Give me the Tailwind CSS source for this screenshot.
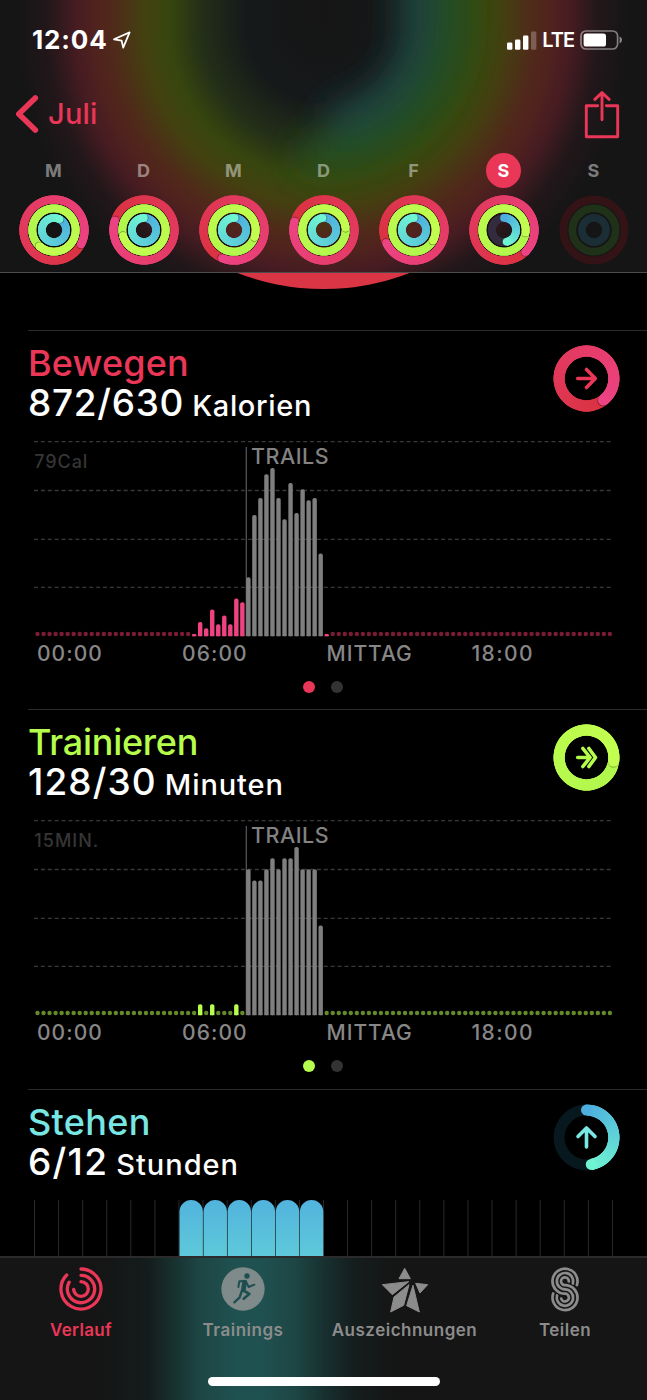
<!DOCTYPE html>
<html lang="de">
<head>
<meta charset="utf-8">
<title>Aktivität</title>
<script src="https://cdn.jsdelivr.net/npm/@tailwindcss/browser@4"></script>
</head>
<body class="bg-black">
<div class="w-[647px] h-[1400px] bg-black overflow-hidden flex flex-col font-['Inter',sans-serif] text-white">

  <header class="relative isolate h-[273px] shrink-0 bg-[#151515] border-b border-[#4c4c4c] flex flex-col overflow-hidden">
    <svg class="absolute inset-0 -z-10" width="647" height="272" viewBox="0 0 647 272">
      <defs>
        <radialGradient id="halo" gradientUnits="userSpaceOnUse" cx="323" cy="25" r="320">
          <stop offset="0" stop-color="#151515"/><stop offset=".24" stop-color="#16191a"/><stop offset=".38" stop-color="#232f18"/>
          <stop offset=".48" stop-color="#37460e"/><stop offset=".56" stop-color="#434110"/><stop offset=".66" stop-color="#50291a"/>
          <stop offset=".71" stop-color="#50231e"/><stop offset=".77" stop-color="#471c22"/><stop offset=".86" stop-color="#22171a"/><stop offset=".96" stop-color="#151515"/>
        </radialGradient>
        <linearGradient id="haloTop" gradientUnits="userSpaceOnUse" x1="3" x2="643" y1="0" y2="0">
          <stop offset=".02" stop-color="#151515"/><stop offset=".07" stop-color="#22171a"/><stop offset=".115" stop-color="#471c22"/>
          <stop offset=".145" stop-color="#50231e"/><stop offset=".17" stop-color="#50291a"/><stop offset=".22" stop-color="#434110"/>
          <stop offset=".26" stop-color="#37460e"/><stop offset=".31" stop-color="#232f18"/><stop offset=".38" stop-color="#16191a"/><stop offset=".5" stop-color="#151515"/>
          <stop offset=".62" stop-color="#16191a"/><stop offset=".69" stop-color="#232f18"/><stop offset=".74" stop-color="#37460e"/>
          <stop offset=".78" stop-color="#434110"/><stop offset=".83" stop-color="#50291a"/><stop offset=".855" stop-color="#50231e"/>
          <stop offset=".885" stop-color="#471c22"/><stop offset=".93" stop-color="#22171a"/><stop offset=".98" stop-color="#151515"/>
        </linearGradient>
        <filter id="soft" filterUnits="userSpaceOnUse" x="150" y="-150" width="450" height="450"><feGaussianBlur stdDeviation="16"/></filter>
      </defs>
      <rect width="647" height="272" fill="url(#halo)"/>
      <rect width="647" height="25" fill="url(#haloTop)"/>
      <g filter="url(#soft)" fill="none">
        <path d="M453 -100V25A130 130 0 0 1 300 153" stroke="#285a1e" stroke-opacity=".8" stroke-width="32"/>
        <path d="M417 -100V25A94 94 0 0 1 328 121" stroke="#1a4640" stroke-opacity=".95" stroke-width="34"/>
      </g>
    </svg>

    <div class="h-[80px] shrink-0 flex items-center pl-[32px] pr-[25px]">
      <span class="text-[26px] font-bold leading-none tracking-[0.85px]">12:04</span>
      <svg class="ml-[4px]" width="20" height="20" viewBox="0 0 20 20"><path d="M2 9.3L17.6 2.4L11.2 17.6L9.6 10.6Z" fill="none" stroke="#fff" stroke-width="1.8" stroke-linejoin="round"/></svg>
      <svg class="ml-auto" width="30" height="19" viewBox="0 0 30 19" fill="#fff"><rect x="0" y="11.5" width="5.4" height="7.2" rx="1.3"/><rect x="8" y="8.4" width="5.4" height="10.3" rx="1.3"/><rect x="16" y="4.4" width="5.4" height="14.3" rx="1.3"/><rect x="24" y="0.6" width="5.4" height="18.1" rx="1.3" fill-opacity=".25"/></svg>
      <span class="ml-[5px] text-[20px] font-semibold leading-none tracking-[-1px]">LTE</span>
      <svg class="ml-[6px] mr-[-1px]" width="43" height="20" viewBox="0 0 43 20"><rect x="1" y="1" width="36.6" height="18" rx="5" fill="none" stroke="#fff" stroke-opacity=".45" stroke-width="1.7"/><rect x="3.6" y="3.4" width="22.4" height="13.2" rx="2.6" fill="#fff"/><path d="M39.6 6.6Q42 7.6 42 10T39.6 13.4Z" fill="#fff" fill-opacity=".5"/></svg>
    </div>

    <div class="h-[70px] shrink-0 flex items-center pl-[15px] pr-[27.5px] text-[#ea3657]">
      <svg class="-mt-[3px]" width="25" height="38" viewBox="0 0 25 38" fill="none" stroke="currentColor" stroke-width="5.6" stroke-linecap="round" stroke-linejoin="round"><path d="M20.3 4L3.8 20L20.300 36" transform="translate(0 -1)"/></svg>
      <span class="ml-[8px] -mt-[3px] text-[29px] font-medium leading-none tracking-[0.2px]">Juli</span>
      <svg class="ml-auto" width="36" height="48" viewBox="0 0 36 48" fill="none" stroke="currentColor" stroke-width="2.9" stroke-linecap="round" stroke-linejoin="round"><path d="M13.7 14.700H2.3V45.800H33.7V14.700H22.3M18 28.700V1.800M10.9 8.400L18 1.600L25.1 8.400"/></svg>
    </div>

    <div class="px-[8.5px] pt-[3px] grid grid-cols-7 justify-items-center text-[18px] font-bold text-white/45">
      <span class="size-[35px] flex items-center justify-center">M</span>
      <span class="size-[35px] flex items-center justify-center">D</span>
      <span class="size-[35px] flex items-center justify-center">M</span>
      <span class="size-[35px] flex items-center justify-center">D</span>
      <span class="size-[35px] flex items-center justify-center">F</span>
      <span class="size-[35px] flex items-center justify-center rounded-full bg-[#ea3657] text-white">S</span>
      <span class="size-[35px] flex items-center justify-center">S</span>
    </div>
    <div id="days" class="px-[8.5px] pt-[6.5px] grid grid-cols-7 justify-items-center"></div>
  </header>

  <main class="h-[983px] shrink-0 overflow-hidden">
    <div class="h-[57px]">
      <svg width="647" height="57" viewBox="0 273 647 57"><circle cx="323.5" cy="49.500" r="239.500" fill="#da3545"/></svg>
    </div>

    <section class="h-[379.4px]">
      <div class="ml-[28px] border-t border-[#2a2a2a]"></div>
      <div class="flex justify-between pl-[28px] pr-[27px] pt-[12px]">
        <div>
          <h2 class="h-[40px] leading-[40px] text-[36px] font-medium tracking-[0.15px] text-[#ea3657]">Bewegen</h2>
          <p class="h-[38px] flex items-baseline font-medium"><span class="text-[37px] leading-[39px] tracking-[0.7px]">872/630</span><span class="ml-[8px] text-[29px] leading-none tracking-[0.65px]">Kalorien</span></p>
        </div>
        <svg id="moveRing" class="mt-[2px]" width="67" height="67" viewBox="-33.5 -33.5 67 67"></svg>
      </div>
      <svg id="moveChart" class="block" width="647" height="251" viewBox="0 421 647 251"></svg>
      <div class="flex gap-[16px] pl-[303px] pt-[9px]"><i class="size-[12px] rounded-full bg-[#ea3657]"></i><i class="size-[12px] rounded-full bg-[#333]"></i></div>
    </section>

    <section class="h-[379.4px]">
      <div class="ml-[28px] border-t border-[#2a2a2a]"></div>
      <div class="flex justify-between pl-[28px] pr-[27px] pt-[12px]">
        <div>
          <h2 class="h-[40px] leading-[40px] text-[36px] font-medium tracking-[-0.25px] text-[#b5fc4c]">Trainieren</h2>
          <p class="h-[38px] flex items-baseline font-medium"><span class="text-[37px] leading-[39px] tracking-[1.1px]">128/30</span><span class="ml-[8px] text-[29px] leading-none tracking-[0.9px]">Minuten</span></p>
        </div>
        <svg id="exRing" class="mt-[2px]" width="67" height="67" viewBox="-33.5 -33.5 67 67"></svg>
      </div>
      <svg id="exChart" class="block" width="647" height="251" viewBox="0 421 647 251"></svg>
      <div class="flex gap-[16px] pl-[303px] pt-[9px]"><i class="size-[12px] rounded-full bg-[#b5fc4c]"></i><i class="size-[12px] rounded-full bg-[#333]"></i></div>
    </section>

    <section>
      <div class="ml-[28px] border-t border-[#2a2a2a]"></div>
      <div class="flex justify-between pl-[28px] pr-[27px] pt-[12px]">
        <div>
          <h2 class="h-[40px] leading-[40px] text-[36px] font-medium tracking-[0.35px] text-[#78e6e2]">Stehen</h2>
          <p class="h-[38px] flex items-baseline font-medium"><span class="text-[37px] leading-[39px] tracking-[1.3px]">6/12</span><span class="ml-[8px] text-[29px] leading-none tracking-[0.95px]">Stunden</span></p>
        </div>
        <svg id="standRing" class="mt-[2px]" width="67" height="67" viewBox="-33.5 -33.5 67 67"></svg>
      </div>
      <svg id="standChart" class="block" width="647" height="100" viewBox="0 1180 647 100"></svg>
    </section>
  </main>

  <footer class="h-[144px] shrink-0 border-t-2 border-[#2b2b2c] bg-[linear-gradient(90deg,#151515_100px,#141c1c_148px,#17302d_172px,#1d4644_200px,#1f5150_235px,#1f5150_262px,#1d4644_295px,#17302f_325px,#151d1d_355px,#151515_395px)]">
    <nav class="flex h-[82px] text-[17px] font-semibold text-[#8c8c8c] leading-[20px]">
      <div class="w-[162px] flex flex-col items-center pt-[9px] text-[#ea3657]">
        <svg width="44" height="44" viewBox="178 52 132 132" fill="none" stroke="currentColor" stroke-width="10" stroke-linecap="round"><path d="M244 58A60 60 0 1 1 201 76M244 77A41 41 0 1 1 208.500 97.500M244 96A22 22 0 1 1 222 119"/></svg>
        <span class="mt-[8.5px] tracking-[0.35px]">Verlauf</span>
      </div>
      <div class="w-[162px] flex flex-col items-center pt-[9px]">
        <svg width="44" height="44" viewBox="662 52 132 132"><circle cx="728" cy="118" r="65" fill="#7f8a8a"/><circle cx="740" cy="79" r="8" fill="#1f4e50"/><g fill="none" stroke="#1f4e50" stroke-linecap="round" stroke-linejoin="round"><path d="M733 97L729 121" stroke-width="14"/><path d="M714 112L717 95L736 94L745 112L762 105" stroke-width="6"/><path d="M729 122L747 133L730 147" stroke-width="8"/><path d="M725 122L718 143L702 158" stroke-width="7"/></g></svg>
        <span class="mt-[8.5px] tracking-[0.5px]">Trainings</span>
      </div>
      <div class="w-[161px] flex flex-col items-center pt-[9px]">
        <svg width="50" height="46" viewBox="166 51 150 138" fill="#8c8c8c" stroke="#8c8c8c" stroke-width="3" stroke-linejoin="round"><path d="M240 55L223 86H257ZM173 104L252 95L203 134ZM253 104L208 141L198 186L237 166ZM265 106L284 186L246 167ZM273 100L309 104L286 129Z"/></svg>
        <span class="mt-[6.5px] tracking-[0.5px]">Auszeichnungen</span>
      </div>
      <div class="w-[160px] flex flex-col items-center pt-[9px]">
        <svg width="30" height="45" viewBox="0 0 30 45" fill="none" stroke="#8c8c8c" stroke-width="2.7" stroke-linecap="round"><path d="M26.900 18A12.500 12.500 0 1 0 15 26.700A3.900 3.900 0 1 1 11.200 31.500"/><path d="M22.900 16.500A8.200 8.200 0 1 0 15 22.400A8.200 8.200 0 1 1 7 28.500"/><path d="M18.800 14.500A3.900 3.900 0 1 0 15 18.100A12.500 12.500 0 1 1 3.200 26.500"/></svg>
        <span class="mt-[7.5px] tracking-[0.45px]">Teilen</span>
      </div>
    </nav>
    <div class="mt-[37px] ml-[208px] w-[231.5px] h-[9px] rounded-full bg-white"></div>
  </footer>
</div>

<script>
const mix = (a, b, t) => 'rgb(' + a.map((v, i) => Math.round(v + (b[i] - v) * t)).join(',') + ')';
const RED = [[218, 50, 64], [236, 67, 132]];
const GREEN = [[176, 246, 76], [195, 255, 80]];
const BLUE = [[78, 175, 222], [112, 245, 210]];
const at = (r, a) => [r * Math.sin(a * Math.PI / 180), -r * Math.cos(a * Math.PI / 180)];

// Arc of a given sweep that finishes at angle `end`, shaded from pal[0] to pal[1].
// Each segment runs on under the next one so that no seams show.
function ring(r, w, end, sweep, pal) {
  let s = '';
  const n = Math.round(sweep / 4), start = end - sweep;
  const seg = i => {
    const a = start + sweep * i / n, b = Math.min(end, start + sweep * (i + 3) / n);
    const p = at(r, a), q = at(r, b);
    return `<path d="M${p}A${r} ${r} 0 0 1 ${q}" stroke="${mix(pal[0], pal[1], i / n)}" stroke-width="${w}" fill="none"/>`;
  };
  const tail = Math.round(n * 0.8);
  for (let i = 0; i < tail; i++) s += seg(i);
  if (sweep >= 360) {
    const c = at(r, end + 60 / r);
    s += `<circle cx="${c[0]}" cy="${c[1]}" r="${w / 2 - .3}" fill="#000" fill-opacity=".4"/>`;
  } else {
    const c = at(r, start);
    s += `<circle cx="${c[0]}" cy="${c[1]}" r="${w / 2}" fill="${mix(pal[0], pal[1], 0)}"/>`;
  }
  for (let i = tail; i < n; i++) s += seg(i);
  const e = at(r, end);
  return s + `<circle cx="${e[0]}" cy="${e[1]}" r="${w / 2}" fill="${mix(pal[0], pal[1], 1)}"/>`;
}
const track = (r, w, c) => `<circle r="${r}" fill="none" stroke="${c}" stroke-width="${w}"/>`;

const days = [[118, 222, 28], [288, 254, 0], [203, 109, 4], [286, 84, -6], [245, 119, 0], [136, 97, null]];
let html = '';
for (const [m, e, b] of days) {
  html += '<svg width="70" height="70" viewBox="-35 -35 70 70">' + track(22, 20, 'rgba(0,0,0,.45)')
    + ring(30.6, 8, m, 360, RED) + ring(21.7, 7.8, e, 360, GREEN)
    + (b === null ? track(12.1, 8, '#332c3e') + ring(12.1, 7.6, 168, 168, BLUE) : ring(12.1, 7.6, b, 360, BLUE)) + '</svg>';
}
html += '<svg width="70" height="70" viewBox="-35 -35 70 70">' + track(30.6, 8, '#331315') + track(21.7, 7.8, '#20311a') + track(12.1, 7.8, '#1b2d35') + '</svg>';
document.getElementById('days').innerHTML = html;

const glyph = (d, c) => `<path d="${d}" fill="none" stroke="${c}" stroke-width="3.600" stroke-linecap="round" stroke-linejoin="round"/>`;
document.getElementById('moveRing').innerHTML = ring(27.4, 11, 142, 360, RED) + glyph('M-8.800 0H8.500M0 -9L8.800 0L0 9', '#ea3657');
document.getElementById('exRing').innerHTML = ring(27.4, 11, 98, 360, GREEN) + glyph('M-8.800 0H3M-3.600 -9L3.600 0L-3.600 9', '#b5fc4c') + glyph('M2.400 -9L9 0L2.400 9', '#b5fc4c');
document.getElementById('standRing').innerHTML = track(27.4, 11, '#07181f') + ring(27.4, 11, 170, 170, BLUE) + glyph('M0 9.500V-8.500M-8.500 -1L0 -9.500L8.500 -1', '#78e6e2');

function chart(id, unit, ls, color, dim, vals, grays, halfDots) {
  let s = '';
  for (const y of [441.7, 490.5, 539.4, 587.4]) s += `<path d="M34 ${y}H612" stroke="#383838" stroke-width="1.300" stroke-dasharray="4 2.900"/>`;
  s += '<path d="M246.300 447V636" stroke="#5a5a5a" stroke-width="1.200"/>';
  for (let i = 0; i < 96; i++) {
    const x = 37.5 + i * 6.025;
    let h = 4.4, c = dim;
    if (i >= 27 && i < 35) { const v = vals[i - 27]; if (v) { h = v; c = color; } }
    else if (i >= 35 && i < 48) { h = grays[i - 35]; c = '#7f7f7f'; }
    else if (halfDots && (i === 26 || i === 48)) { h = 2.2; c = color; }
    s += `<rect x="${x - 2.2}" y="${636.2 - h}" width="4.400" height="${h}" rx="${h < 5 ? Math.min(2.2, h / 2) : 1.9}" fill="${c}"/>`;
    if (h > 5 || h < 3) s += `<rect x="${x - 2.2}" y="${636.2 - Math.min(h, 3) / 2}" width="4.400" height="${Math.min(h, 3) / 2}" fill="${c}"/>`;
  }
  const t = (x, y, f, l, c, str) => `<text x="${x}" y="${y}" font-size="${f}" letter-spacing="${l}" fill="${c}" font-weight="500">${str}</text>`;
  s += t(34.3, 467.7, 18, ls, '#363636', unit) + t(251, 463.6, 21.5, .5, '#828282', 'TRAILS');
  s += t(37, 661, 21, 1.05, '#878787', '00:00') + t(182, 661, 21, 1.1, '#878787', '06:00') + t(326.500, 661, 21, 1, '#878787', 'MITTAG') + t(471.5, 661, 21, 1.4, '#878787', '18:00');
  document.getElementById(id).innerHTML = s;
}
chart('moveChart', '79Cal', .9, '#ee4380', '#7b1c35', [14.3, 8, 26.7, 12, 20.7, 12, 37.7, 34],
  [59, 121.3, 138.3, 162, 168.3, 138.3, 117, 153.3, 123.3, 147, 136, 138.3, 82.7], true);
chart('exChart', '15MIN.', 1, '#b9ff4d', '#668a2a', [11, 0, 11, 0, 0, 0, 11, 0],
  [146, 134.7, 134.7, 146, 157, 146, 157, 157, 168.3, 146, 146, 146, 89.7], false);

let st = '<defs><linearGradient id="sky" gradientUnits="userSpaceOnUse" x1="0" x2="0" y1="1200" y2="1260"><stop stop-color="#52b3dd"/><stop offset="1" stop-color="#5ecbda"/></linearGradient></defs>';
for (let i = 0; i <= 24; i++) st += `<path d="M${34.5 + i * 24.08} 1200V1280" stroke="#2a2a2a" stroke-width="1"/>`;
for (let i = 6; i < 12; i++) st += `<rect x="${35 + i * 24.08}" y="1200" width="23.400" height="100" rx="11.700" fill="url(#sky)"/>`;
document.getElementById('standChart').innerHTML = st;
</script>
</body>
</html>
